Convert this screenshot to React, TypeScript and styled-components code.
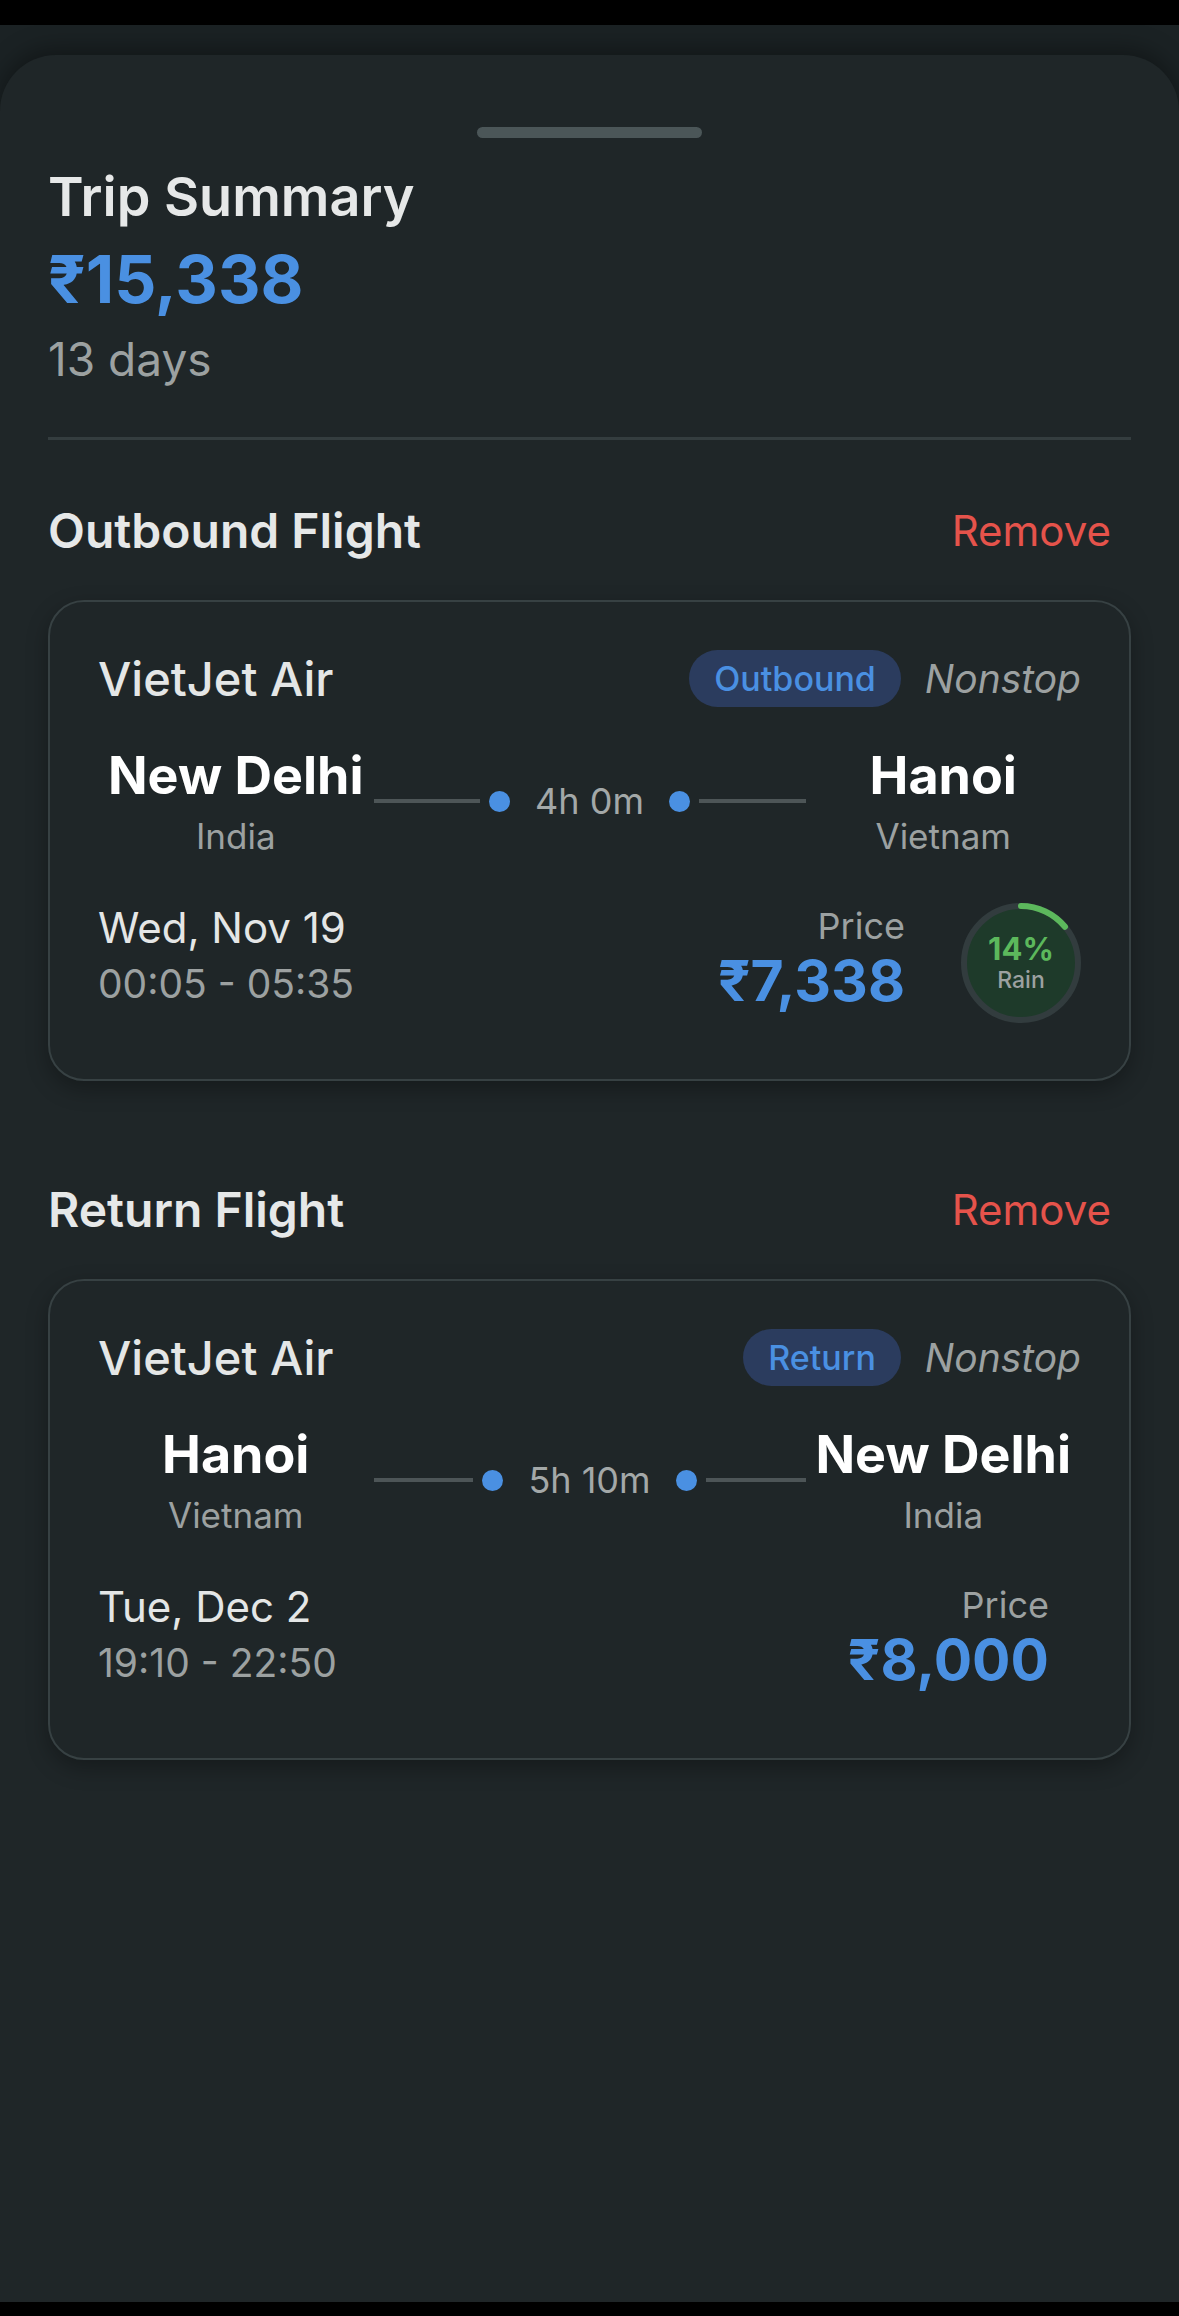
import React from "react";
import styled, { createGlobalStyle } from "styled-components";

const GlobalStyle = createGlobalStyle`
  html, body {
    margin: 0;
    padding: 0;
    background: #000;
  }
  body {
    font-family: Inter, "Noto Sans", "Liberation Sans", sans-serif;
    -webkit-font-smoothing: antialiased;
  }
  * { box-sizing: border-box; }
`;

const Screen = styled.div`
  width: 1179px;
  height: 2316px;
  display: flex;
  flex-direction: column;
  padding: 25px 0 14px;
  background: #000;
`;

const Backdrop = styled.div`
  flex: 1;
  display: flex;
  flex-direction: column;
  padding-top: 30px;
  background: #1b2224;
`;

const Sheet = styled.div`
  flex: 1;
  display: flex;
  flex-direction: column;
  padding: 0 48px;
  background: #1f2628;
  border-radius: 56px 56px 0 0;
  box-shadow: 0 -6px 24px rgba(0, 0, 0, 0.35);
`;

const Handle = styled.div`
  align-self: center;
  width: 225px;
  height: 11px;
  margin-top: 72px;
  border-radius: 6px;
  background: #4b5658;
`;

const Title = styled.h1`
  margin: 26px 0 0;
  font-size: 54px;
  line-height: 65px;
  font-weight: 600;
  color: #e6e8e8;
`;

const Total = styled.div`
  margin-top: 12px;
  font-size: 66px;
  line-height: 77px;
  font-weight: 700;
  color: #4a90e2;
`;

const Days = styled.div`
  margin-top: 14px;
  font-size: 46px;
  line-height: 54px;
  color: #9ca1a1;
`;

const Divider = styled.hr`
  margin: 51px 0 0;
  border: none;
  height: 3px;
  background: #343d3f;
`;

const Section = styled.section<{ $gap: number }>`
  display: flex;
  flex-direction: column;
  margin-top: ${(p) => p.$gap}px;
`;

const SectionHeader = styled.div`
  display: flex;
  align-items: center;
  justify-content: space-between;
  height: 58px;
`;

const SectionTitle = styled.h2`
  margin: 0;
  font-size: 48px;
  line-height: 58px;
  font-weight: 600;
  color: #e6e8e8;
`;

const RemoveButton = styled.button`
  border: none;
  background: none;
  padding: 0 20px 0 0;
  font-family: inherit;
  font-size: 42px;
  line-height: 54px;
  font-weight: 400;
  color: #e5534b;
`;

const Card = styled.div`
  margin-top: 40px;
  display: flex;
  flex-direction: column;
  padding: 48px 48px 56px;
  border: 2px solid #374143;
  border-radius: 36px;
  background: #1f2628;
  box-shadow: 0 8px 22px rgba(0, 0, 0, 0.3);
`;

const CardHeader = styled.div`
  display: flex;
  align-items: center;
  justify-content: space-between;
  height: 57px;
`;

const Airline = styled.div`
  font-size: 47px;
  line-height: 54px;
  font-weight: 500;
  color: #e4e6e6;
`;

const Tags = styled.div`
  display: flex;
  align-items: center;
  gap: 24px;
`;

const Pill = styled.span`
  display: inline-flex;
  align-items: center;
  height: 57px;
  padding: 0 25px;
  border-radius: 29px;
  background: #2b3c5e;
  font-size: 34px;
  font-weight: 500;
  color: #4a90e2;
`;

const Stops = styled.span`
  font-size: 39px;
  font-style: italic;
  color: #9ca1a1;
`;

const Route = styled.div`
  margin-top: 38px;
  display: grid;
  grid-template-columns: 1fr 432px 1fr;
  align-items: center;
`;

const Place = styled.div`
  display: flex;
  flex-direction: column;
  align-items: center;
`;

const City = styled.div`
  font-size: 52px;
  line-height: 61px;
  font-weight: 700;
  color: #ffffff;
  white-space: nowrap;
`;

const Country = styled.div`
  margin-top: 9px;
  font-size: 35px;
  line-height: 42px;
  color: #9ca1a1;
`;

const Path = styled.div`
  display: flex;
  align-items: center;
`;

const Track = styled.div`
  flex: 1;
  height: 4px;
  background: #4d5557;
`;

const Dot = styled.div`
  width: 21px;
  height: 21px;
  border-radius: 50%;
  background: #4a90e2;
  margin: 0 9px;
`;

const Duration = styled.div`
  padding: 0 16px;
  font-size: 36px;
  line-height: 44px;
  color: #a3a8a8;
  white-space: nowrap;
`;

const Details = styled.div`
  margin-top: 46px;
  display: flex;
  align-items: flex-start;
  min-height: 120px;
`;

const When = styled.div`
  flex: 1;
  display: flex;
  flex-direction: column;
`;

const DateText = styled.div`
  font-size: 42px;
  line-height: 50px;
  color: #e4e6e6;
`;

const TimeText = styled.div`
  margin-top: 7px;
  font-size: 39px;
  line-height: 47px;
  color: #9ca1a1;
`;

const PriceBlock = styled.div`
  display: flex;
  flex-direction: column;
  align-items: flex-end;
  margin-top: 2px;
  margin-right: 32px;
`;

const PriceLabel = styled.div`
  font-size: 36px;
  line-height: 43px;
  color: #9ca1a1;
`;

const PriceValue = styled.div`
  font-size: 57px;
  line-height: 66px;
  font-weight: 700;
  color: #4a90e2;
`;

const Rain = styled.div`
  position: relative;
  width: 120px;
  height: 120px;
  margin-left: 24px;
  flex-shrink: 0;
`;

const RainLabel = styled.div`
  position: absolute;
  inset: 0;
  display: flex;
  flex-direction: column;
  align-items: center;
  justify-content: center;
`;

const RainPct = styled.div`
  font-size: 31px;
  line-height: 32px;
  font-weight: 700;
  color: #5cb85c;
`;

const RainWord = styled.div`
  margin-top: 2px;
  font-size: 23px;
  line-height: 26px;
  font-weight: 500;
  color: #9ca1a1;
`;

function RainGauge({ pct }: { pct: number }) {
  const r = 57;
  const c = 2 * Math.PI * r;
  return (
    <Rain>
      <svg width="120" height="120" viewBox="0 0 120 120">
        <circle cx="60" cy="60" r={r} fill="#1e3a2a" stroke="#323c3e" strokeWidth="6" />
        <circle
          cx="60"
          cy="60"
          r={r}
          fill="none"
          stroke="#5cb85c"
          strokeWidth="6"
          strokeLinecap="round"
          strokeDasharray={`${(c * pct) / 100} ${c}`}
          transform="rotate(-90 60 60)"
        />
      </svg>
      <RainLabel>
        <RainPct>{pct}%</RainPct>
        <RainWord>Rain</RainWord>
      </RainLabel>
    </Rain>
  );
}

type Flight = {
  heading: string;
  tag: string;
  from: string;
  fromCountry: string;
  to: string;
  toCountry: string;
  duration: string;
  date: string;
  times: string;
  price: string;
  rain?: number;
  gap: number;
};

const flights: Flight[] = [
  {
    heading: "Outbound Flight",
    tag: "Outbound",
    from: "New Delhi",
    fromCountry: "India",
    to: "Hanoi",
    toCountry: "Vietnam",
    duration: "4h 0m",
    date: "Wed, Nov 19",
    times: "00:05 - 05:35",
    price: "₹7,338",
    rain: 14,
    gap: 62,
  },
  {
    heading: "Return Flight",
    tag: "Return",
    from: "Hanoi",
    fromCountry: "Vietnam",
    to: "New Delhi",
    toCountry: "India",
    duration: "5h 10m",
    date: "Tue, Dec 2",
    times: "19:10 - 22:50",
    price: "₹8,000",
    gap: 100,
  },
];

function FlightSection({ f }: { f: Flight }) {
  return (
    <Section $gap={f.gap}>
      <SectionHeader>
        <SectionTitle>{f.heading}</SectionTitle>
        <RemoveButton>Remove</RemoveButton>
      </SectionHeader>
      <Card>
        <CardHeader>
          <Airline>VietJet Air</Airline>
          <Tags>
            <Pill>{f.tag}</Pill>
            <Stops>Nonstop</Stops>
          </Tags>
        </CardHeader>
        <Route>
          <Place>
            <City>{f.from}</City>
            <Country>{f.fromCountry}</Country>
          </Place>
          <Path>
            <Track />
            <Dot />
            <Duration>{f.duration}</Duration>
            <Dot />
            <Track />
          </Path>
          <Place>
            <City>{f.to}</City>
            <Country>{f.toCountry}</Country>
          </Place>
        </Route>
        <Details>
          <When>
            <DateText>{f.date}</DateText>
            <TimeText>{f.times}</TimeText>
          </When>
          <PriceBlock>
            <PriceLabel>Price</PriceLabel>
            <PriceValue>{f.price}</PriceValue>
          </PriceBlock>
          {f.rain !== undefined && <RainGauge pct={f.rain} />}
        </Details>
      </Card>
    </Section>
  );
}

export default function App() {
  return (
    <>
      <GlobalStyle />
      <Screen>
        <Backdrop>
          <Sheet>
            <Handle />
            <Title>Trip Summary</Title>
            <Total>₹15,338</Total>
            <Days>13 days</Days>
            <Divider />
            {flights.map((f) => (
              <FlightSection key={f.heading} f={f} />
            ))}
          </Sheet>
        </Backdrop>
      </Screen>
    </>
  );
}
